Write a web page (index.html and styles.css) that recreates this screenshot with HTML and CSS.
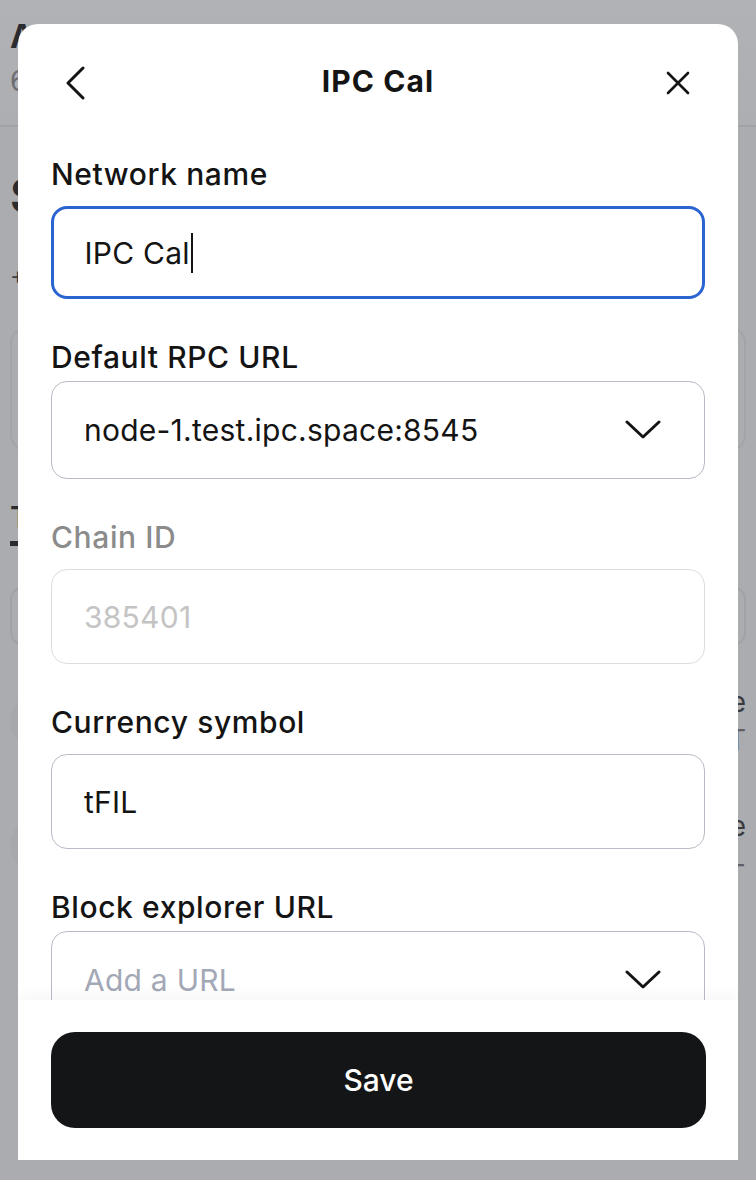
FILE: index.html
```html
<!DOCTYPE html>
<html lang="en">
<head>
<meta charset="utf-8">
<title>IPC Cal</title>
<link rel="stylesheet" href="styles.css">
</head>
<body>
<div class="page" aria-hidden="true">
  <header class="page-head">
    <div class="page-title">A</div>
    <div class="page-sub">6</div>
  </header>
  <section class="page-main">
    <div class="page-h2">S</div>
    <div class="page-add">+</div>
    <div class="page-cards">
      <div class="page-card"></div>
      <div class="page-card"></div>
    </div>
    <div class="page-tab">T</div>
    <div class="page-search"></div>
    <div class="page-row">
      <span class="page-avatar"></span>
      <span class="page-row-right"><span>e</span><span class="page-sym">T</span></span>
    </div>
    <div class="page-row">
      <span class="page-avatar"></span>
      <span class="page-row-right"><span>e</span><span class="page-sym">-</span></span>
    </div>
  </section>
</div>

<div class="modal" role="dialog" aria-label="IPC Cal">
  <div class="modal-head">
    <button class="head-btn back" aria-label="Back">
      <svg width="22" height="34" viewBox="0 0 22 34"><polyline points="19,2 4,17 19,32" fill="none" stroke="#141414" stroke-width="3" stroke-linecap="round" stroke-linejoin="round"/></svg>
    </button>
    <div class="modal-title">IPC Cal</div>
    <button class="head-btn close" aria-label="Close">
      <svg width="24" height="24" viewBox="0 0 24 24"><path d="M2 2 L22 22 M22 2 L2 22" fill="none" stroke="#141414" stroke-width="2.6" stroke-linecap="round"/></svg>
    </button>
  </div>

  <div class="modal-body">
    <div class="field field-input">
      <div class="field-label">Network name</div>
      <div class="box focused"><span>IPC Cal</span><span class="caret"></span></div>
    </div>

    <div class="field field-select">
      <div class="field-label">Default RPC URL</div>
      <div class="box select">
        <span>node-1.test.ipc.space:8545</span>
        <svg class="chev" width="36" height="20" viewBox="0 0 36 20"><polyline points="2,2 18,17 34,2" fill="none" stroke="#141414" stroke-width="3" stroke-linecap="round" stroke-linejoin="round"/></svg>
      </div>
    </div>

    <div class="field field-input">
      <div class="field-label label-disabled">Chain ID</div>
      <div class="box disabled"><span>385401</span></div>
    </div>

    <div class="field field-input">
      <div class="field-label">Currency symbol</div>
      <div class="box"><span>tFIL</span></div>
    </div>

    <div class="field field-select">
      <div class="field-label">Block explorer URL</div>
      <div class="box select">
        <span class="placeholder">Add a URL</span>
        <svg class="chev" width="36" height="20" viewBox="0 0 36 20"><polyline points="2,2 18,17 34,2" fill="none" stroke="#141414" stroke-width="3" stroke-linecap="round" stroke-linejoin="round"/></svg>
      </div>
    </div>
  </div>

  <div class="modal-foot">
    <button class="save">Save</button>
  </div>
</div>
</body>
</html>
```

FILE: styles.css
```css
* {
  box-sizing: border-box;
  margin: 0;
  padding: 0;
}

html,
body {
  width: 756px;
  height: 1180px;
  overflow: hidden;
}

body {
  position: relative;
  background: #abacaf;
  color: #141414;
  font-family: Inter, "Noto Sans", sans-serif;
}

/* ---------- dimmed page behind the dialog ---------- */
.page {
  padding: 0 10px;
  color: #2b2c2f;
}

.page-head {
  height: 127px;
  margin: 0 -10px;
  padding: 18px 10px 0;
  background: linear-gradient(#b1b2b5, #adaeb1);
  border-bottom: 2px solid #a1a2a5;
}

.page-title {
  font-size: 32px;
  line-height: 38px;
  font-weight: 700;
}

.page-sub {
  margin-top: 8px;
  font-size: 28px;
  line-height: 34px;
  color: #6d6e73;
}

.page-main {
  display: flex;
  flex-direction: column;
}

.page-h2 {
  margin-top: 40px;
  font-size: 48px;
  line-height: 58px;
  font-weight: 700;
}

.page-add {
  margin-top: 36px;
  font-size: 24px;
  line-height: 30px;
  color: #3a3b3e;
}

.page-cards {
  margin-top: 36px;
  display: flex;
  gap: 16px;
  height: 124px;
}

.page-card {
  flex: 1;
  border: 2px solid #a3a4a8;
  border-radius: 16px;
}

.page-tab {
  margin-top: 48px;
  align-self: flex-start;
  font-size: 30px;
  line-height: 36px;
  font-weight: 600;
  padding-bottom: 6px;
  border-bottom: 5px solid #2b2c2f;
}

.page-search {
  margin-top: 40px;
  height: 60px;
  border: 2px solid #a1a2a6;
  border-radius: 14px;
}

.page-row {
  margin-top: 30px;
  height: 90px;
  display: flex;
  align-items: center;
  justify-content: space-between;
}

.page-row + .page-row {
  margin-top: 34px;
}

.page-avatar {
  width: 54px;
  height: 54px;
  border-radius: 50%;
  background: #a7a8ab;
}

.page-row-right {
  display: flex;
  flex-direction: column;
  align-items: flex-end;
  font-size: 28px;
  line-height: 38px;
  color: #3a3b3e;
}

.page-sym {
  color: #5f6065;
}

/* ---------- dialog ---------- */
.modal {
  position: absolute;
  top: 24px;
  left: 18px;
  width: 720px;
  height: 1136px;
  background: #fff;
  border-radius: 20px 20px 0 0;
  display: flex;
  flex-direction: column;
  overflow: hidden;
}

.modal-head {
  flex: none;
  height: 114px;
  padding: 4px 46px 0;
  display: grid;
  grid-template-columns: 1fr auto 1fr;
  align-items: center;
}

.head-btn {
  border: none;
  background: none;
  display: flex;
  align-items: center;
}

.head-btn.back {
  justify-self: start;
}

.head-btn.close {
  justify-self: end;
  margin-right: 2px;
}

.modal-title {
  margin-top: -4px;
  font-size: 30px;
  line-height: 34px;
  font-weight: 700;
  letter-spacing: 1.1px;
  color: #141414;
}

.modal-body {
  flex: 1;
  min-height: 0;
  overflow: hidden;
  padding: 18px 33px 0;
  display: flex;
  flex-direction: column;
  gap: 40px;
}

.field {
  display: flex;
  flex-direction: column;
  flex: none;
}

.field-label {
  font-size: 30px;
  line-height: 36px;
  font-weight: 500;
  letter-spacing: 0.6px;
  color: #141414;
}

.field-input .field-label {
  margin-bottom: 14px;
}

.field-select .field-label {
  margin-bottom: 6px;
}

.label-disabled {
  color: #8b8b8b;
}

.box {
  height: 95px;
  border: 1.5px solid #b9bbc6;
  border-radius: 16px;
  display: flex;
  align-items: center;
  padding: 0 43px 0 32px;
  font-size: 30px;
  letter-spacing: 0.25px;
  color: #141414;
}

.box.focused {
  height: 93px;
  border: 3px solid #2a64d0;
  padding-left: 30.5px;
}

.box.select {
  height: 98px;
  justify-content: space-between;
}

.box.disabled {
  border-color: #dcdce2;
  color: #c4c4c4;
}

.placeholder {
  color: #a3a8b7;
}

.caret {
  width: 2px;
  height: 40px;
  margin-left: 1px;
  background: #141414;
}

.chev {
  flex: none;
}

.modal-foot {
  flex: none;
  position: relative;
  padding: 32px 32px 32px 33px;
  background: #fff;
  box-shadow: 0 -6px 14px rgba(0, 0, 0, 0.035);
}

.save {
  display: block;
  width: 100%;
  height: 96px;
  border: none;
  border-radius: 24px;
  background: #141517;
  color: #fff;
  font-family: Inter, "Noto Sans", sans-serif;
  font-size: 30px;
  font-weight: 500;
}
```
